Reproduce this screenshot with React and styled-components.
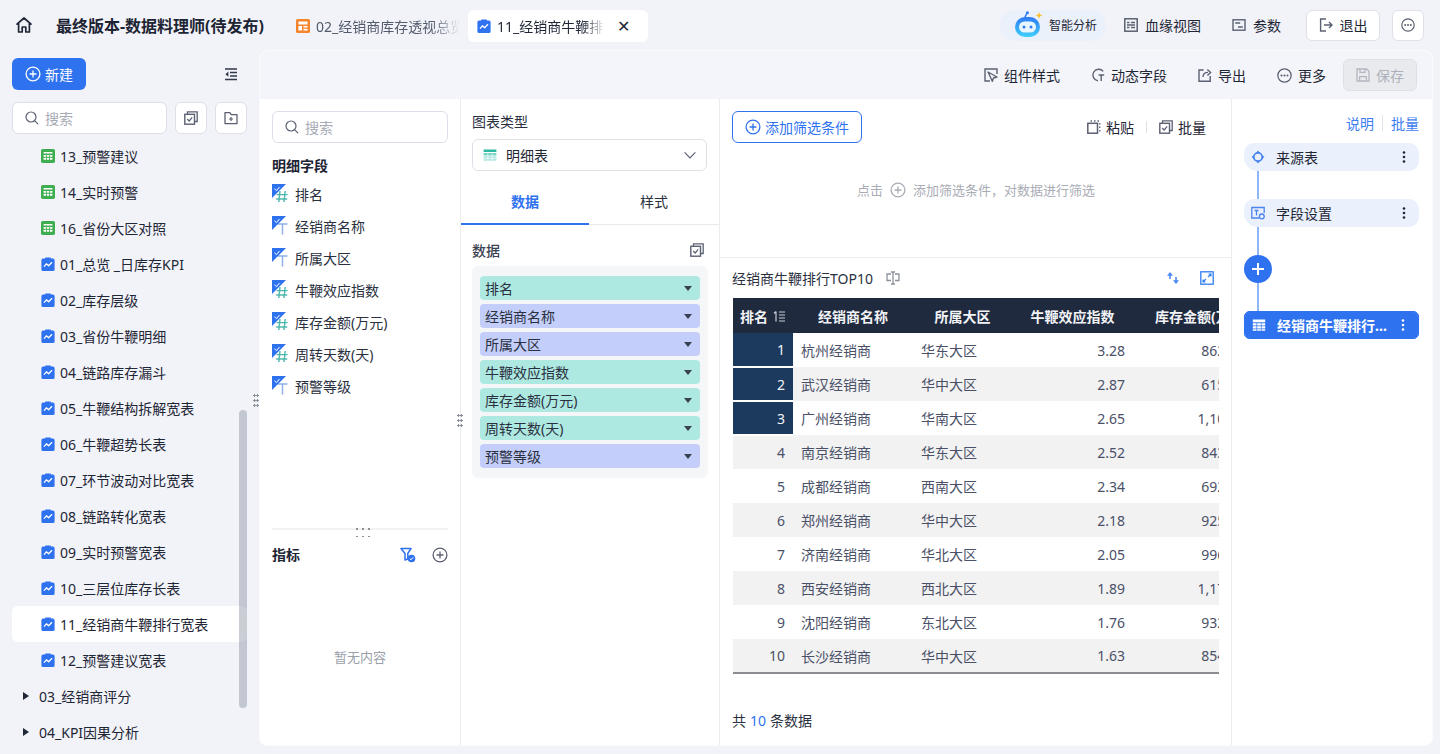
import React from 'react';
import styled, { createGlobalStyle } from 'styled-components';

const Global = createGlobalStyle`
  html, body { margin: 0; padding: 0; height: 100%; overflow: hidden; }
  body { font-family: "Noto Sans", "Noto Sans CJK SC", sans-serif; font-size: 14px; color: #1f2635; background: #f1f3f9; }
  * { box-sizing: border-box; }
`;

const GRAY = '#5b6172';
const BLUE = '#2f72f0';

const Svg = ({ s = 16, vb, children, ...p }) => (
  <svg width={s} height={s} viewBox={vb || `0 0 ${s} ${s}`} fill="none" style={{ flex: 'none', display: 'block' }} {...p}>{children}</svg>
);

const HomeIcon = () => (
  <Svg s={18}><path d="M2 8.2 9 2l7 6.2M3.6 7v9h3.6v-5h3.6v5h3.6V7" stroke="#1f2635" strokeWidth="1.7" strokeLinejoin="round" strokeLinecap="round" /></Svg>
);
const ChartDoc = () => (
  <Svg s={14}>
    <path d="M4.5.6h5l.6 1H12a1.6 1.6 0 0 1 1.6 1.6v9.2A1.6 1.6 0 0 1 12 14H2a1.6 1.6 0 0 1-1.6-1.6V3.2A1.6 1.6 0 0 1 2 1.6h1.9z" fill={BLUE} />
    <path d="M3 9.6 5.4 6.8l2.2 2 3.4-3.6" stroke="#fff" strokeWidth="1.3" strokeLinejoin="round" />
  </Svg>
);
const SheetIcon = () => (
  <Svg s={14}>
    <rect width="14" height="14" rx="1.8" fill="#3fae50" />
    <path d="M2.6 3h8.8v1.6H2.6zM2.6 6h2.4v1.7H2.6zM5.8 6h2.4v1.7H5.8zM9 6h2.4v1.7H9zM2.6 8.8h2.4v2H2.6zM5.8 8.8h2.4v2H5.8zM9 8.8h2.4v2H9z" fill="#fff" />
  </Svg>
);
const DashIcon = () => (
  <Svg s={14}>
    <rect width="14" height="14" rx="1.6" fill="#f5852a" />
    <path d="M2.4 2.6h9.2v3H2.4zM2.4 7h3.6v4.4H2.4zM7.4 7h4.2v1.6H7.4zM7.4 9.8h4.2v1.6H7.4z" fill="#fff" />
  </Svg>
);
const SearchIcon = () => (
  <Svg s={16}><circle cx="7" cy="7" r="5" stroke={GRAY} strokeWidth="1.2" /><path d="m10.8 10.8 3 3" stroke={GRAY} strokeWidth="1.2" strokeLinecap="round" /></Svg>
);
const BatchIcon = () => (
  <Svg s={14}>
    <path d="M3.5 3V.8h9.7v9.7H11" stroke={GRAY} strokeWidth="1.3" />
    <rect x=".8" y="3.3" width="9.7" height="9.9" stroke={GRAY} strokeWidth="1.4" />
    <path d="m3.2 8 2 2 3-3.6" stroke={GRAY} strokeWidth="1.2" />
  </Svg>
);
const FolderPlus = () => (
  <Svg s={14}>
    <path d="M1 1.6h4.8l1.4 2H13v9H1z" stroke={GRAY} strokeWidth="1.3" strokeLinejoin="round" />
    <path d="M7 6v4M5 8h4" stroke={GRAY} strokeWidth="1.2" />
  </Svg>
);
const Collapse = () => (
  <Svg s={14}><path d="M1 2h12M6 5.5h7M6 9h7M1 12.4h12" stroke="#30384a" strokeWidth="1.5" /><path d="M4.4 4.6 1.4 7.2l3 2.6z" fill="#30384a" /></Svg>
);
const PlusCircle = ({ c = '#fff', s = 16 }) => (
  <svg width={s} height={s} viewBox="0 0 16 16" fill="none" style={{ flex: 'none', display: 'block' }}>
    <circle cx="8" cy="8" r="6.9" stroke={c} strokeWidth="1.3" /><path d="M8 4.6v6.8M4.6 8h6.8" stroke={c} strokeWidth="1.3" />
  </svg>
);
const Robot = () => (
  <svg width="30" height="28" viewBox="0 0 30 28" style={{ flex: 'none', display: 'block' }}>
    <defs><linearGradient id="rb" x1="0" y1="0" x2="0" y2="1"><stop offset="0" stopColor="#2f7af5" /><stop offset="1" stopColor="#3fd0fa" /></linearGradient></defs>
    <path d="M12 6 14 2" stroke="#2f7af5" strokeWidth="1.6" strokeLinecap="round" />
    <circle cx="14.4" cy="1.8" r="1.5" fill="#2f7af5" />
    <path d="M26 1l1 2.4 2.4 1-2.4 1-1 2.4-1-2.4-2.4-1 2.4-1z" fill="#fbc02d" />
    <rect x="2" y="6" width="25" height="20" rx="10" fill="url(#rb)" />
    <rect x="6" y="10.5" width="17" height="11" rx="5.5" fill="#e8f6ff" />
    <circle cx="11" cy="16" r="1.5" fill="#2f7af5" /><circle cx="18" cy="16" r="1.5" fill="#2f7af5" />
  </svg>
);
const LineageIcon = () => (
  <Svg s={14}><rect x=".8" y=".8" width="12.4" height="12.4" stroke={GRAY} strokeWidth="1.5" /><path d="M3 4.5h2.4M3 9.5h2.4M7 4.5h4M7 9.5h4M3 7h8" stroke={GRAY} strokeWidth="1.5" /></Svg>
);
const ParamIcon = () => (
  <Svg s={14}><rect x="1" y="1.8" width="12" height="10.4" stroke={GRAY} strokeWidth="1.4" /><path d="M3.2 5h5M6 9h4.8" stroke={GRAY} strokeWidth="1.4" /></Svg>
);
const ExitIcon = () => (
  <Svg s={14}><path d="M7 1H1.6v12H7" stroke={GRAY} strokeWidth="1.4" /><path d="M5 7h8M10 4l3 3-3 3" stroke={GRAY} strokeWidth="1.4" /></Svg>
);
const DotsCircle = ({ s = 14 }) => (
  <svg width={s} height={s} viewBox="0 0 14 14" fill="none" style={{ flex: 'none', display: 'block' }}>
    <circle cx="7" cy="7" r="6.2" stroke={GRAY} strokeWidth="1.2" />
    <circle cx="4.2" cy="7" r="1" fill={GRAY} /><circle cx="7" cy="7" r="1" fill={GRAY} /><circle cx="9.8" cy="7" r="1" fill={GRAY} />
  </svg>
);
const StyleIcon = () => (
  <Svg s={14}><path d="M13 6V1H1v12h5" stroke={GRAY} strokeWidth="1.4" /><path d="M4 4l9 5-3.6 1-1 3.4z" stroke={GRAY} strokeWidth="1.3" strokeLinejoin="round" /></Svg>
);
const DynIcon = () => (
  <Svg s={14}><path d="M12.2 3.4A5.8 5.8 0 1 0 7 12.8" stroke={GRAY} strokeWidth="1.4" /><path d="M7.6 7h5.6M10.2 7v6" stroke={GRAY} strokeWidth="1.4" /></Svg>
);
const ExportIcon = () => (
  <Svg s={14}><path d="M5.6 2H1v11.2h11.2V8" stroke={GRAY} strokeWidth="1.4" /><path d="M5 9c0-3 2-4.600 5-4.600M9.400 1.400l3.200 3-3.200 3" stroke={GRAY} strokeWidth="1.4" /></Svg>
);
const SaveIcon = () => (
  <Svg s={14}><path d="M1 1h9.600L13 3.400V13H1z" stroke="#b3b6bf" strokeWidth="1.3" /><path d="M4 1v3.400h5V1M3.600 13V8.600h6.800V13" stroke="#b3b6bf" strokeWidth="1.2" /></Svg>
);
const PasteIcon = () => (
  <Svg s={14}>
    <rect x=".8" y="3.300" width="9.700" height="9.900" stroke={GRAY} strokeWidth="1.5" />
    <path d="M3.500 1h1.500M7 1h1.500M10.500 1h1.500M12.800 3v1.500M12.800 6.500v1.500M12.800 10v1.500" stroke={GRAY} strokeWidth="1.300" />
  </Svg>
);
const TableGlyph = ({ c = '#fff' }) => (
  <Svg s={14}>
    <path d="M.8 1.500h12.400v2.800H.8z" fill={c} />
    <path d="M.8 5.200h3.700v2.300H.8zM5.200 5.200h3.700v2.300H5.200zM9.500 5.200h3.700v2.300H9.500zM.8 8.200h3.700v2.300H.8zM5.200 8.200h3.700v2.300H5.200zM9.500 8.200h3.700v2.300H9.500zM.8 11.200h3.700v1.600H.8zM5.200 11.200h3.700v1.600H5.200zM9.500 11.200h3.700v1.600H9.500z" fill={c} />
  </Svg>
);
const TealTable = () => (
  <Svg s={14}>
    <path d="M.6 1.500h12.800v2.600H.6z" fill="#2cb7a0" />
    <path d="M.6 5h4v2.400h-4zM5.200 5h3.600v2.400H5.200zM9.400 5h4v2.400h-4z" fill="#71d3c4" />
    <path d="M.6 8.200h4v2.200h-4zM5.200 8.200h3.600v2.200H5.200zM9.400 8.200h4v2.200h-4zM.6 11.100h4v1.600h-4zM5.200 11.100h3.600v1.600H5.200zM9.400 11.100h4v1.600h-4z" fill="#b2e7df" />
  </Svg>
);
const Chevron = () => (
  <Svg s={14}><path d="m1.600 4.400 5.400 5.400 5.400-5.400" stroke={GRAY} strokeWidth="1.200" /></Svg>
);
const FieldIcon = ({ kind }) => (
  <svg width="18" height="20" viewBox="0 0 18 20" fill="none" style={{ flex: 'none', display: 'block' }}>
    {kind === 'num'
      ? <path d="M8 7 6.800 18M13.200 7 12 18M4.600 10.600h11M4.200 15h11" stroke="#4fb8ae" strokeWidth="1.400" />
      : <path d="M5.500 8h10M10.500 8v10.500" stroke="#8fb0e8" strokeWidth="1.500" />}
    <path d="M0 0h14L0 14z" fill={BLUE} />
    <path d="m2.500 4.800 2 1.800 3-3.600" stroke="#fff" strokeWidth="1" />
  </svg>
);
const FilterCheck = () => (
  <Svg s={16}>
    <path d="M1 1.500h10L7.800 6.500V12L5 13V6.500z" stroke={BLUE} strokeWidth="1.500" strokeLinejoin="round" />
    <circle cx="11.500" cy="11.500" r="3.800" fill={BLUE} />
    <path d="m9.700 11.500 1.300 1.300 2.200-2.500" stroke="#fff" strokeWidth="1" />
  </Svg>
);
const AlignIcon = () => (
  <Svg s={14}>
    <path d="M5 3H1v6.500h4M9 3h4v6.500H9" stroke="#8d919c" strokeWidth="1.300" />
    <path d="M5 1h4M7 1v12M5 13h4" stroke="#8d919c" strokeWidth="1.300" />
  </Svg>
);
const SwapIcon = () => (
  <Svg s={14}><path d="M4 1 1 4.800h2.200V8h1.600V4.800H7zM10 13l3-3.800h-2.200V6H9.200v3.200H7z" fill="#4b8bf5" /></Svg>
);
const ExpandIcon = () => (
  <Svg s={14}><rect x=".8" y=".8" width="12.400" height="12.400" stroke="#2f7df0" strokeWidth="1.300" /><path d="M8 6l3-3M8.600 3H11v2.400M6 8l-3 3M3 8.600V11h2.400" stroke="#2f7df0" strokeWidth="1.100" /></Svg>
);
const SortIcon = () => (
  <Svg s={13}><path d="M3 1.500v10M1 3.500l2-2" stroke="#c8ccd6" strokeWidth="1.200" /><path d="M6 2h6M6 5h6M6 8h6M6 11h6" stroke="#c8ccd6" strokeWidth="1.200" /></Svg>
);
const SourceIcon = () => (
  <Svg s={14}>
    <circle cx="7" cy="7" r="4.200" stroke="#4a84ee" strokeWidth="1.800" />
    <path d="M7 .5 9 3H5zM7 13.500 5 11h4zM.5 7 3 5v4zM13.500 7 11 9V5z" fill="#4a84ee" />
  </Svg>
);
const FieldSetIcon = () => (
  <Svg s={14}>
    <path d="M8 12H.8V1.500h12.400V7" stroke="#4a84ee" strokeWidth="1.300" />
    <path d="M3.500 4.500h4M5.500 4.500v5" stroke="#4a84ee" strokeWidth="1.300" />
    <circle cx="10.800" cy="10.400" r="2.400" stroke="#4a84ee" strokeWidth="1.300" />
  </Svg>
);
const Kebab = ({ c = '#1f2635' }) => (
  <svg width="4" height="14" viewBox="0 0 4 14" style={{ flex: 'none', display: 'block' }}>
    <circle cx="2" cy="2.500" r="1.300" fill={c} /><circle cx="2" cy="7" r="1.300" fill={c} /><circle cx="2" cy="11.500" r="1.300" fill={c} />
  </svg>
);

const Page = styled.div`display: flex; flex-direction: column; height: 754px; width: 1440px; overflow: hidden; background: #f1f3f9;`;
const Header = styled.header`display: flex; align-items: center; height: 50px; flex: none; padding-right: 16px;`;
const HomeBtn = styled.div`width: 56px; display: flex; padding-left: 15px; flex: none;`;
const AppTitle = styled.div`font-size: 16px; font-weight: 700; width: 232px; flex: none; white-space: nowrap; color: #1d2433;`;
const Tab = styled.div`
  display: flex; align-items: center; gap: 6px; height: 32px; border-radius: 6px; flex: none;
  width: ${p => p.$w}px; padding-left: ${p => p.$pl}px;
  background: ${p => (p.$active ? '#fff' : 'transparent')}; margin-top: 1px;
`;
const TabText = styled.span`
  width: ${p => p.$w}px; overflow: hidden; white-space: nowrap; color: ${p => (p.$active ? '#1f2635' : '#535a6b')};
  -webkit-mask-image: linear-gradient(90deg, #000 80%, transparent);
  mask-image: linear-gradient(90deg, #000 80%, transparent);
`;
const TabClose = styled.span`margin-left: 6px; font-size: 16px; line-height: 1; color: #1f2635;`;
const HeaderRight = styled.div`margin-left: auto; display: flex; align-items: center;`;
const AiPill = styled.div`
  display: flex; align-items: center; gap: 6px; width: 106px; height: 31px; padding-left: 13px;
  background: #ebf1fb; border-radius: 16px; font-size: 12px; margin-right: 18px;
`;
const HeadLink = styled.div`display: flex; align-items: center; gap: 7px; white-space: nowrap; margin-right: ${p => p.$mr}px;`;
const OutlineBtn = styled.div`
  display: flex; align-items: center; justify-content: center; gap: 7px; height: 31px; background: #fff;
  border: 1px solid #dfe1e8; border-radius: 6px; width: ${p => p.$w}px; margin-right: ${p => p.$mr || 0}px;
`;

const Body = styled.div`display: flex; flex: 1; min-height: 0;`;
const Sidebar = styled.aside`width: 259px; flex: none; display: flex; flex-direction: column; padding: 8px 12px 0; position: relative; min-height: 0;`;
const SideTop = styled.div`display: flex; align-items: center; justify-content: space-between; padding-right: 9px;`;
const NewBtn = styled.div`
  display: flex; align-items: center; justify-content: center; gap: 4px; width: 74px; height: 32px; color: #fff;
  background: ${BLUE}; border-radius: 6px;
`;
const SideSearchRow = styled.div`display: flex; gap: 8px; margin-top: 12px;`;
const SearchBox = styled.div`
  display: flex; align-items: center; gap: 5px; height: 32px; background: #fff; border: 1px solid #dcdfe8; border-radius: 6px;
  padding-left: 11px; color: #a7abb6; width: ${p => p.$w}px; flex: none;
`;
const SquareBtn = styled.div`
  width: 32px; height: 32px; display: flex; align-items: center; justify-content: center; background: #fff;
  border: 1px solid #dfe1e8; border-radius: 6px;
`;
const TreeList = styled.div`margin-top: 4px; flex: 1; overflow: hidden;`;
const TreeItem = styled.div`
  display: flex; align-items: center; gap: 5px; height: 36px; padding-left: 29px; white-space: nowrap; border-radius: 6px;
  background: ${p => (p.$active ? '#fff' : 'transparent')};
`;
const FolderItem = styled(TreeItem)`padding-left: 11px; gap: 10px;`;
const Caret = styled.span`width: 0; height: 0; border-left: 6px solid #1f2635; border-top: 4.500px solid transparent; border-bottom: 4.500px solid transparent;`;
const ScrollThumb = styled.div`position: absolute; left: 239px; top: 360px; width: 8px; height: 298px; background: rgba(150,155,170,.5); border-radius: 4px;`;
const Grip = styled.div`
  position: absolute; width: 6px; height: 14px; top: ${p => p.$t}px; left: ${p => p.$l}px;
  background-image: radial-gradient(circle, #8a8e99 1px, transparent 1.100px); background-size: 3px 5px;
`;
const HGrip = styled.div`
  position: absolute; left: 82px; top: -5px; width: 16px; height: 12px;
  background-image: radial-gradient(circle, #8a8e99 .8px, transparent 1px); background-size: 6px 8px;
`;

const Main = styled.main`
  width: 1174px; flex: none; margin-bottom: 8px; display: flex; flex-direction: column; background: #fff;
  border-radius: 8px; border: 1px solid #fbfbfd; overflow: hidden; position: relative;
`;
const MainBar = styled.div`
  height: 48px; flex: none; background: #f4f5fa; display: flex; align-items: center; justify-content: flex-end; padding-right: 15px;
`;
const BarItem = styled.div`display: flex; align-items: center; gap: 6px; margin-right: ${p => p.$mr}px; white-space: nowrap;`;
const SaveBtn = styled.div`
  width: 74px; height: 32px; display: flex; align-items: center; justify-content: center; gap: 6px; color: #aeb1ba;
  background: #e9eaee; border: 1px solid #dfe0e6; border-radius: 6px;
`;
const Columns = styled.div`display: flex; flex: 1; min-height: 0;`;

const FieldPanel = styled.section`width: 201px; flex: none; display: flex; flex-direction: column; border-right: 1px solid #ebecf0; position: relative;`;
const FieldTop = styled.div`height: 429px; flex: none; padding: 12px 12px 0;`;
const BoldTitle = styled.div`font-weight: 700; line-height: 20px; color: #1d2433;`;
const FieldTitle = styled(BoldTitle)`margin-top: 13px; margin-bottom: 3px;`;
const FieldRow = styled.div`display: flex; align-items: center; gap: 5px; height: 32px; padding-bottom: 2px; color: #2a3040;`;
const FieldBottom = styled.div`margin: 0 12px; flex: 1; border-top: 2px solid #f2f2f3; position: relative; display: flex; flex-direction: column;`;
const MetricHead = styled.div`display: flex; align-items: center; height: 20px; margin-top: 15px; gap: 16px;`;
const MetricTitle = styled(BoldTitle)`margin-right: auto;`;
const EmptyText = styled.div`text-align: center; color: #9b9fa9; font-size: 13px; margin-top: 82px;`;

const ConfigPanel = styled.section`width: 259px; flex: none; border-right: 1px solid #ebecf0; display: flex; flex-direction: column;`;
const ConfigTop = styled.div`padding: 13px 11px 0;`;
const ConfigLabel = styled.div`line-height: 20px; color: #2a3040;`;
const SelectBox = styled.div`
  display: flex; align-items: center; gap: 9px; height: 32px; margin-top: 7px; border: 1px solid #dde0e7; border-radius: 6px;
  padding: 0 9px 0 10px; width: 235px;
`;
const SelectText = styled.span`flex: 1;`;
const TabsRow = styled.div`display: flex; height: 47px; margin-top: 7px; border-bottom: 1px solid #e8e9ed;`;
const CfgTab = styled.div`
  width: ${p => p.$w}px; display: flex; align-items: center; justify-content: center; font-weight: ${p => (p.$active ? 700 : 400)};
  color: ${p => (p.$active ? BLUE : '#2a3040')}; margin-bottom: -1px;
  border-bottom: 2px solid ${p => (p.$active ? BLUE : 'transparent')};
`;
const DataHead = styled.div`display: flex; align-items: center; justify-content: space-between; height: 20px; margin: 15px 11px 0; padding-right: 4px; font-weight: 500; color: #3c4252;`;
const PillBox = styled.div`
  margin: 6px 11px 0; width: 236px; padding: 10px 8px; background: #f5f6f8; border-radius: 6px; display: flex; flex-direction: column; gap: 4px;
`;
const Pill = styled.div`
  height: 24px; border-radius: 4px; display: flex; align-items: center; justify-content: space-between; padding: 0 8px 0 5px;
  background: ${p => (p.$teal ? '#aee9e1' : '#c4cefa')}; color: #2a3040; white-space: nowrap;
`;
const PillCaret = styled.span`width: 0; height: 0; border-top: 5.500px solid #3a4050; border-left: 4.500px solid transparent; border-right: 4.500px solid transparent;`;

const CenterPanel = styled.section`width: 512px; flex: none; border-right: 1px solid #ebecf0; display: flex; flex-direction: column; min-width: 0;`;
const FilterArea = styled.div`height: 159px; flex: none; border-bottom: 1px solid #ebecf0; padding: 12px 12px 0; display: flex; flex-direction: column;`;
const FilterTop = styled.div`display: flex; align-items: center; justify-content: space-between;`;
const AddFilter = styled.div`
  display: flex; align-items: center; justify-content: center; gap: 4px; width: 130px; height: 32px; color: ${BLUE}; background: #fff;
  border: 1px solid ${BLUE}; border-radius: 6px;
`;
const FilterActions = styled.div`display: flex; align-items: center; padding-right: 13px;`;
const FilterAction = styled.div`display: flex; align-items: center; gap: 5px; white-space: nowrap;`;
const VDiv = styled.span`width: 1px; height: 12px; background: #dfe1e6; margin: 0 ${p => p.$m}px;`;
const FilterHint = styled.div`
  display: flex; align-items: center; justify-content: center; gap: 7px; margin-top: 37px; color: #a9acb5; font-size: 13px;
  padding-left: 1px;
`;
const ChartHead = styled.div`display: flex; align-items: center; height: 40px; padding: 0 17px 0 12px; flex: none;`;
const ChartTitle = styled.div`color: #2a3040; margin-right: 13px; white-space: nowrap;`;
const ChartTools = styled.div`margin-left: auto; display: flex; gap: 20px;`;
const TableWrap = styled.div`width: 486px; margin-left: 13px; overflow: hidden; flex: none;`;
const Table = styled.table`border-collapse: collapse; table-layout: fixed; width: 620px;`;
const Th = styled.th`
  height: 35px; padding: 0; background: #1f2a3f; color: #f2f3f6; font-weight: 700; white-space: nowrap; text-align: ${p => p.$left ? 'left' : 'center'};
  padding-left: ${p => p.$left ? 22 : 0}px;
`;
const ThInner = styled.span`display: inline-flex; align-items: center; gap: 5px; vertical-align: middle;`;
const Td = styled.td`
  height: 34px; padding: 0 ${p => p.$pr || 8}px 0 8px; white-space: nowrap; color: #4a5068;
  text-align: ${p => (p.$right ? 'right' : 'left')};
`;
const RankTd = styled(Td)`
  background: ${p => (p.$top ? '#1c3a5e' : 'transparent')}; color: ${p => (p.$top ? '#f2f4f8' : '#4a5068')};
  border-bottom: ${p => (p.$top ? '2px solid #fff' : '0')};
`;
const Tr = styled.tr`
  background: ${p => (p.$odd ? '#f2f2f2' : '#fff')};
  border-bottom: ${p => (p.$last ? '2px solid #8b8d92' : '0')};
`;
const Total = styled.div`margin: 36px 0 0 12px; color: #2a3040;`;
const TotalNum = styled.span`color: ${BLUE}; margin: 0 4px;`;

const FlowPanel = styled.section`flex: 1; padding: 12px 13px 0 12px; display: flex; flex-direction: column; min-width: 0;`;
const FlowLinks = styled.div`display: flex; justify-content: flex-end; align-items: center; color: #3c7df0; height: 24px; margin-bottom: 8px;`;
const FlowLinkDiv = styled.span`width: 1px; height: 16px; background: #dfe3ea; margin: 0 8px;`;
const Node = styled.div`
  display: flex; align-items: center; height: 28px; width: 175px; border-radius: 10px 10px 10px 14px; padding: 0 13px 0 7px; gap: 11px;
  background: ${p => (p.$active ? BLUE : '#eaf1fd')}; color: ${p => (p.$active ? '#fff' : '#1f2635')};
  font-weight: ${p => (p.$active ? 700 : 400)};
  ${p => p.$active && 'outline: 1px solid #2f72f0; outline-offset: -1px; box-shadow: inset 0 0 0 2px #2f72f0, inset 0 0 0 1px #fff; border-radius: 6px; border: 1px solid #2f72f0;'}
`;
const NodeText = styled.span`flex: 1; white-space: nowrap; overflow: hidden; text-overflow: ellipsis; min-width: 0;`;
const Connector = styled.div`width: 2px; height: ${p => p.$h}px; background: #8fb6f7; margin-left: 13px;`;
const AddCircle = styled.div`
  width: 28px; height: 28px; border-radius: 50%; background: ${BLUE}; display: flex; align-items: center; justify-content: center;
`;

const tree = [
  ['sheet', '13_预警建议'], ['sheet', '14_实时预警'], ['sheet', '16_省份大区对照'],
  ['chart', '01_总览 _日库存KPI'], ['chart', '02_库存层级'], ['chart', '03_省份牛鞭明细'], ['chart', '04_链路库存漏斗'],
  ['chart', '05_牛鞭结构拆解宽表'], ['chart', '06_牛鞭超势长表'], ['chart', '07_环节波动对比宽表'], ['chart', '08_链路转化宽表'],
  ['chart', '09_实时预警宽表'], ['chart', '10_三层位库存长表'], ['chart', '11_经销商牛鞭排行宽表', true], ['chart', '12_预警建议宽表'],
];
const fields = [['num', '排名'], ['text', '经销商名称'], ['text', '所属大区'], ['num', '牛鞭效应指数'], ['num', '库存金额(万元)'], ['num', '周转天数(天)'], ['text', '预警等级']];
const rows = [
  ['杭州经销商', '华东大区', '3.28', '862.35'], ['武汉经销商', '华中大区', '2.87', '615.80'], ['广州经销商', '华南大区', '2.65', '1,105.2'],
  ['南京经销商', '华东大区', '2.52', '843.60'], ['成都经销商', '西南大区', '2.34', '692.15'], ['郑州经销商', '华中大区', '2.18', '925.40'],
  ['济南经销商', '华北大区', '2.05', '996.70'], ['西安经销商', '西北大区', '1.89', '1,172.3'], ['沈阳经销商', '东北大区', '1.76', '932.85'], ['长沙经销商', '华中大区', '1.63', '854.20'],
];

export default function App() {
  return (
    <Page>
      <Global />
      <Header>
        <HomeBtn><HomeIcon /></HomeBtn>
        <AppTitle>最终版本-数据料理师(待发布)</AppTitle>
        <Tab $w={180} $pl={8}><DashIcon /><TabText $w={144}>02_经销商库存透视总览</TabText></Tab>
        <Tab $w={180} $pl={9} $active><ChartDoc /><TabText $w={108} $active>11_经销商牛鞭排行宽表</TabText><TabClose>✕</TabClose></Tab>
        <HeaderRight>
          <AiPill><Robot />智能分析</AiPill>
          <HeadLink $mr={31}><LineageIcon />血缘视图</HeadLink>
          <HeadLink $mr={25}><ParamIcon />参数</HeadLink>
          <OutlineBtn $w={74} $mr={12}><ExitIcon />退出</OutlineBtn>
          <OutlineBtn $w={32}><DotsCircle /></OutlineBtn>
        </HeaderRight>
      </Header>
      <Body>
        <Sidebar>
          <SideTop>
            <NewBtn><PlusCircle />新建</NewBtn>
            <Collapse />
          </SideTop>
          <SideSearchRow>
            <SearchBox $w={155}><SearchIcon />搜索</SearchBox>
            <SquareBtn><BatchIcon /></SquareBtn>
            <SquareBtn><FolderPlus /></SquareBtn>
          </SideSearchRow>
          <TreeList>
            {tree.map(([k, t, a]) => (
              <TreeItem key={t} $active={a}>{k === 'sheet' ? <SheetIcon /> : <ChartDoc />}{t}</TreeItem>
            ))}
            <FolderItem><Caret />03_经销商评分</FolderItem>
            <FolderItem><Caret />04_KPI因果分析</FolderItem>
          </TreeList>
          <ScrollThumb />
          <Grip $t={343} $l={253} />
        </Sidebar>
        <Main>
          <MainBar>
            <BarItem $mr={31}><StyleIcon />组件样式</BarItem>
            <BarItem $mr={31}><DynIcon />动态字段</BarItem>
            <BarItem $mr={31}><ExportIcon />导出</BarItem>
            <BarItem $mr={17}><DotsCircle s={15} />更多</BarItem>
            <SaveBtn><SaveIcon />保存</SaveBtn>
          </MainBar>
          <Columns>
            <FieldPanel>
              <FieldTop>
                <SearchBox $w={176}><SearchIcon />搜索</SearchBox>
                <FieldTitle>明细字段</FieldTitle>
                {fields.map(([k, t]) => <FieldRow key={t}><FieldIcon kind={k} />{t}</FieldRow>)}
              </FieldTop>
              <FieldBottom>
                <HGrip />
                <MetricHead>
                  <MetricTitle>指标</MetricTitle>
                  <FilterCheck />
                  <PlusCircle c={GRAY} />
                </MetricHead>
                <EmptyText>暂无内容</EmptyText>
              </FieldBottom>
              <Grip $t={314} $l={197} />
            </FieldPanel>
            <ConfigPanel>
              <ConfigTop>
                <ConfigLabel>图表类型</ConfigLabel>
                <SelectBox><TealTable /><SelectText>明细表</SelectText><Chevron /></SelectBox>
              </ConfigTop>
              <TabsRow>
                <CfgTab $w={128} $active>数据</CfgTab>
                <CfgTab $w={130}>样式</CfgTab>
              </TabsRow>
              <DataHead>数据<BatchIcon /></DataHead>
              <PillBox>
                {fields.map(([k, t]) => <Pill key={t} $teal={k === 'num'}>{t}<PillCaret /></Pill>)}
              </PillBox>
            </ConfigPanel>
            <CenterPanel>
              <FilterArea>
                <FilterTop>
                  <AddFilter><PlusCircle c={BLUE} />添加筛选条件</AddFilter>
                  <FilterActions>
                    <FilterAction><PasteIcon />粘贴</FilterAction>
                    <VDiv $m={12} />
                    <FilterAction><BatchIcon />批量</FilterAction>
                  </FilterActions>
                </FilterTop>
                <FilterHint>点击<PlusCircle c="#a9acb5" />添加筛选条件，对数据进行筛选</FilterHint>
              </FilterArea>
              <ChartHead>
                <ChartTitle>经销商牛鞭排行TOP10</ChartTitle>
                <AlignIcon />
                <ChartTools><SwapIcon /><ExpandIcon /></ChartTools>
              </ChartHead>
              <TableWrap>
                <Table>
                  <colgroup>
                    <col width="60" /><col width="120" /><col width="99" /><col width="121" /><col width="120" /><col width="100" />
                  </colgroup>
                  <thead>
                    <tr>
                      <Th><ThInner>排名<SortIcon /></ThInner></Th>
                      <Th>经销商名称</Th>
                      <Th>所属大区</Th>
                      <Th>牛鞭效应指数</Th>
                      <Th $left>库存金额(万元)</Th>
                      <Th>周转天数(天)</Th>
                    </tr>
                  </thead>
                  <tbody>
                    {rows.map((r, i) => (
                      <Tr key={r[0]} $odd={i % 2 === 1} $last={i === 9}>
                        <RankTd $right $top={i < 3}>{i + 1}</RankTd>
                        <Td>{r[0]}</Td>
                        <Td>{r[1]}</Td>
                        <Td $right>{r[2]}</Td>
                        <Td $right>{r[3]}</Td>
                        <Td $right>{18 + i}</Td>
                      </Tr>
                    ))}
                  </tbody>
                </Table>
              </TableWrap>
              <Total>共<TotalNum>10</TotalNum>条数据</Total>
            </CenterPanel>
            <FlowPanel>
              <FlowLinks>说明<FlowLinkDiv />批量</FlowLinks>
              <Node><SourceIcon />来源表<NodeText /><Kebab /></Node>
              <Connector $h={28} />
              <Node><FieldSetIcon />字段设置<NodeText /><Kebab /></Node>
              <Connector $h={28} />
              <AddCircle><Svg s={14}><path d="M7 1v12M1 7h12" stroke="#fff" strokeWidth="2" /></Svg></AddCircle>
              <Connector $h={28} />
              <Node $active><TableGlyph /><NodeText>经销商牛鞭排行宽表</NodeText><Kebab c="#fff" /></Node>
            </FlowPanel>
          </Columns>
        </Main>
      </Body>
    </Page>
  );
}
